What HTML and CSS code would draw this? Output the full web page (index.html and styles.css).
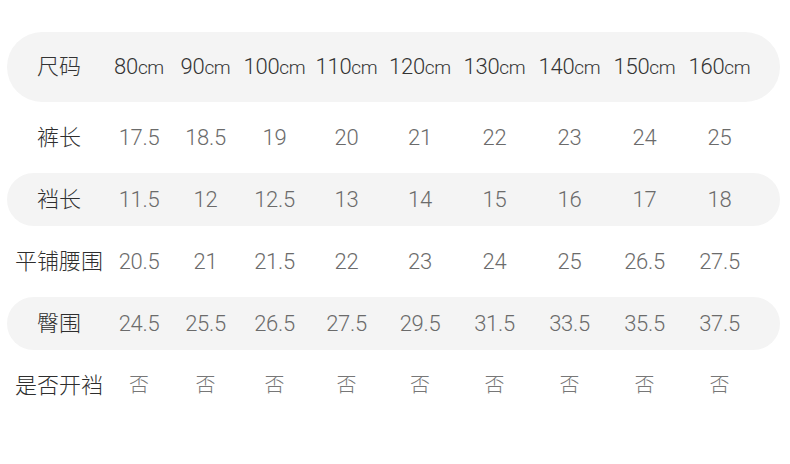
FILE: index.html
```html
<!DOCTYPE html>
<html lang="zh-CN">
<head>
<meta charset="utf-8">
<title>尺码表</title>
<link rel="stylesheet" href="styles.css">
</head>
<body>
<div class="size-table">
  <div class="row row--head row--shade">
    <div class="cell label">尺码</div>
    <div class="cell">80<span class="unit">cm</span></div>
    <div class="cell">90<span class="unit">cm</span></div>
    <div class="cell">100<span class="unit">cm</span></div>
    <div class="cell">110<span class="unit">cm</span></div>
    <div class="cell">120<span class="unit">cm</span></div>
    <div class="cell">130<span class="unit">cm</span></div>
    <div class="cell">140<span class="unit">cm</span></div>
    <div class="cell">150<span class="unit">cm</span></div>
    <div class="cell">160<span class="unit">cm</span></div>
  </div>
  <div class="row">
    <div class="cell label">裤长</div>
    <div class="cell">17.5</div><div class="cell">18.5</div><div class="cell">19</div>
    <div class="cell">20</div><div class="cell">21</div><div class="cell">22</div>
    <div class="cell">23</div><div class="cell">24</div><div class="cell">25</div>
  </div>
  <div class="row row--shade">
    <div class="cell label">裆长</div>
    <div class="cell">11.5</div><div class="cell">12</div><div class="cell">12.5</div>
    <div class="cell">13</div><div class="cell">14</div><div class="cell">15</div>
    <div class="cell">16</div><div class="cell">17</div><div class="cell">18</div>
  </div>
  <div class="row">
    <div class="cell label">平铺腰围</div>
    <div class="cell">20.5</div><div class="cell">21</div><div class="cell">21.5</div>
    <div class="cell">22</div><div class="cell">23</div><div class="cell">24</div>
    <div class="cell">25</div><div class="cell">26.5</div><div class="cell">27.5</div>
  </div>
  <div class="row row--shade">
    <div class="cell label">臀围</div>
    <div class="cell">24.5</div><div class="cell">25.5</div><div class="cell">26.5</div>
    <div class="cell">27.5</div><div class="cell">29.5</div><div class="cell">31.5</div>
    <div class="cell">33.5</div><div class="cell">35.5</div><div class="cell">37.5</div>
  </div>
  <div class="row">
    <div class="cell label">是否开裆</div>
    <div class="cell cjk">否</div><div class="cell cjk">否</div><div class="cell cjk">否</div>
    <div class="cell cjk">否</div><div class="cell cjk">否</div><div class="cell cjk">否</div>
    <div class="cell cjk">否</div><div class="cell cjk">否</div><div class="cell cjk">否</div>
  </div>
</div>
</body>
</html>
```

FILE: styles.css
```css
* { box-sizing: border-box; }

html, body {
  margin: 0;
  padding: 0;
  background: #ffffff;
}

body {
  font-family: Roboto, "Noto Sans CJK SC", sans-serif;
  color: #666666;
}

.size-table {
  display: flex;
  flex-direction: column;
  gap: 9px;
  width: 773px;
  margin-left: 7px;
  padding-top: 32px;
}

.row {
  display: grid;
  grid-template-columns: 94px 66px 67px 71px 73px 74px 75px 75px 75px 75px;
  align-items: center;
  height: 53px;
  padding-left: 5px;
  border-radius: 27px;
}

.row--head {
  height: 70px;
  border-radius: 35px;
}

.row--shade {
  background: #f4f4f4;
}

.cell {
  display: flex;
  justify-content: center;
  align-items: baseline;
  white-space: nowrap;
  font-size: 22px;
  line-height: 26px;
  font-weight: 300;
  color: #6b6b6b;
  letter-spacing: -0.3px;
}

.row--head .cell {
  color: #333333;
}

.unit {
  font-size: 19px;
}

.label {
  font-family: "Noto Sans CJK SC", sans-serif;
  font-weight: 300;
  font-size: 22px;
  line-height: 22px;
  padding-bottom: 6px;
  color: #2e2e2e;
  letter-spacing: 0;
}

.cjk {
  font-family: "Noto Sans CJK SC", sans-serif;
  font-size: 20px;
  line-height: 20px;
  padding-bottom: 3px;
  font-weight: 300;
  color: #777777;
  letter-spacing: 0;
}
```
